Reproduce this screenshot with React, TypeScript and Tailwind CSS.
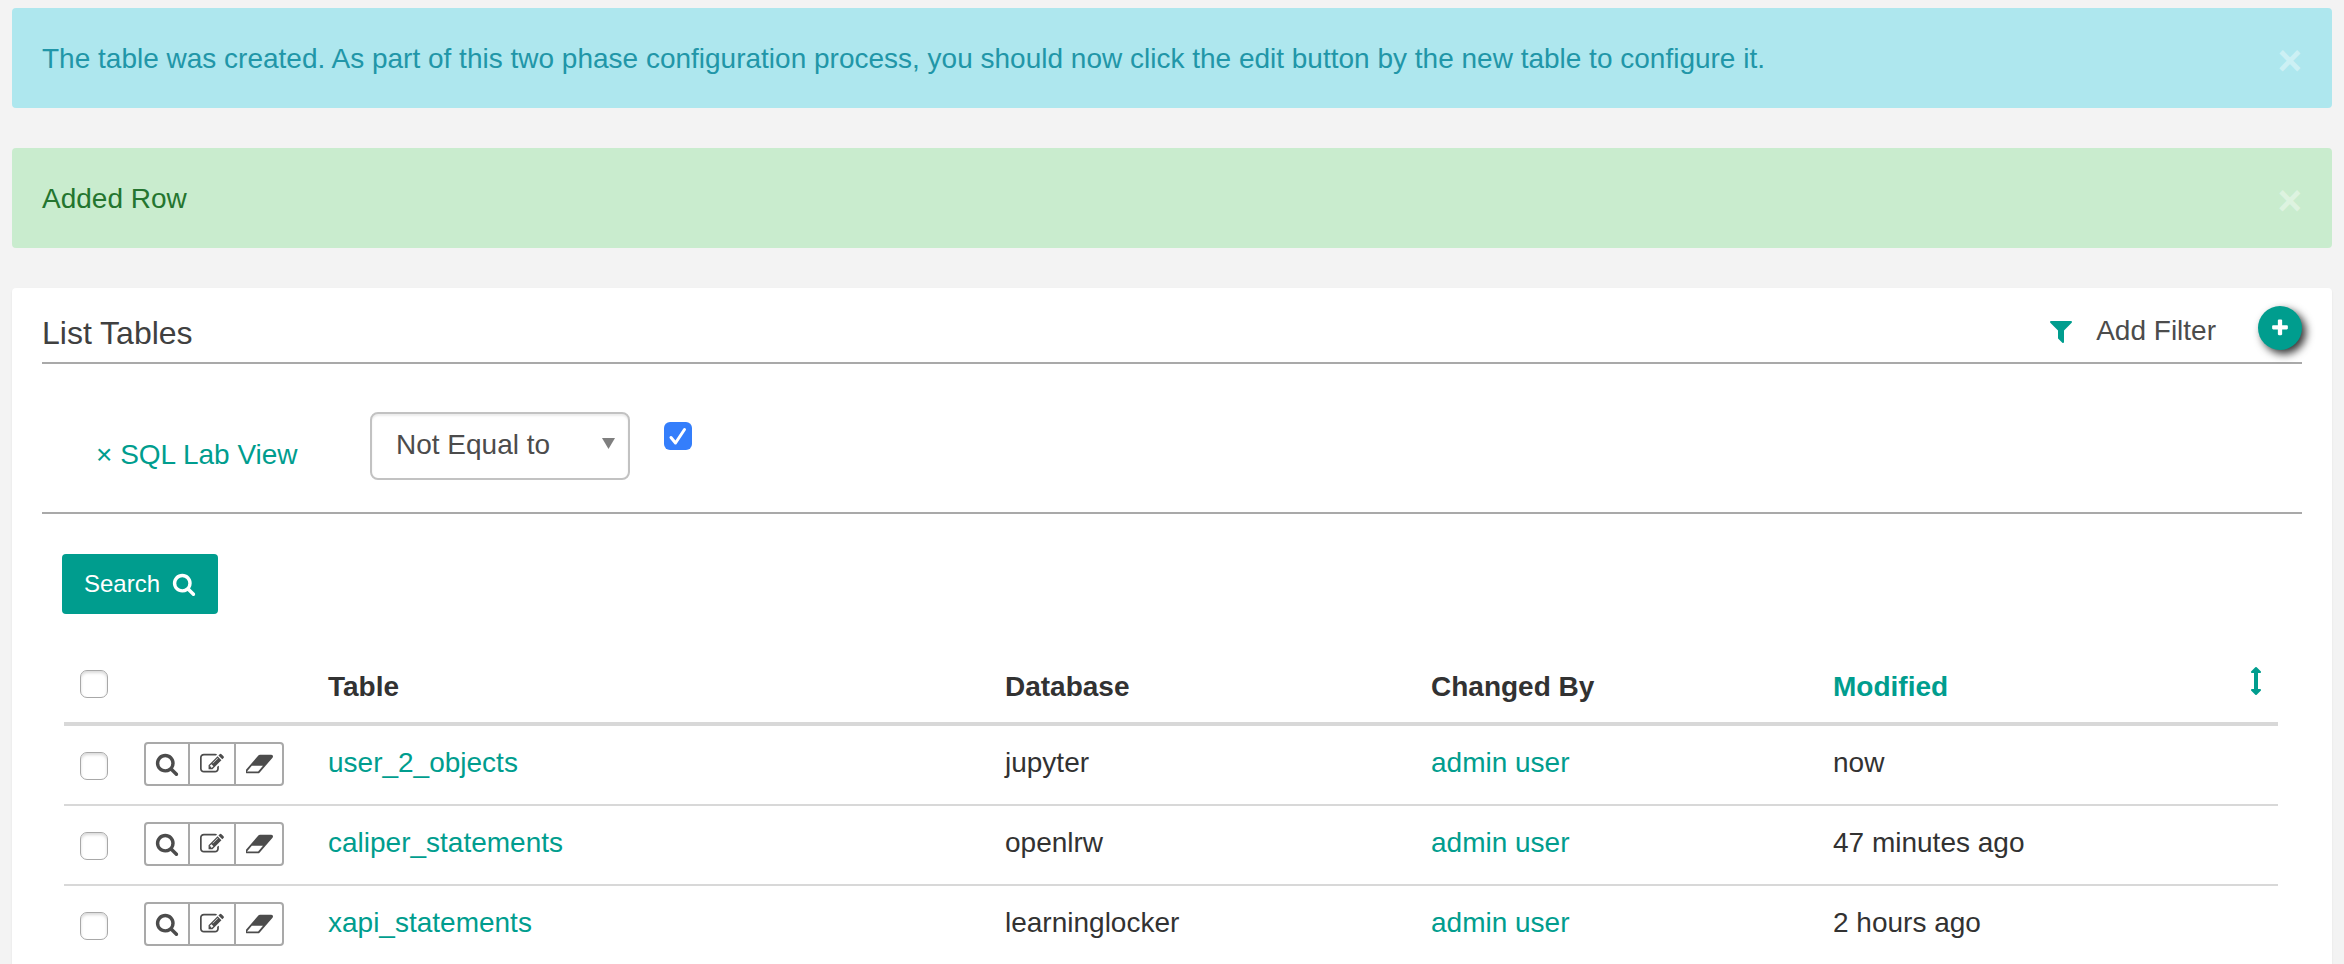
import type { ReactNode } from "react";

const PATHS = {
  search:
    "M1216 832q0-185-131.5-316.5t-316.5-131.5-316.5 131.5-131.5 316.5 131.5 316.5 316.5 131.5 316.5-131.5 131.5-316.5zm512 832q0 52-38 90t-90 38q-54 0-90-38l-343-342q-179 124-399 124-143 0-273.5-55.5t-225-150-150-225-55.5-273.5 55.5-273.5 150-225 225-150 273.5-55.5 273.5 55.5 225 150 150 225 55.5 273.5q0 220-124 399l343 343q37 37 37 90z",
  edit: "M888 1184l116-116-152-152-116 116v56h96v96h56zm440-720q-16-16-33 1l-350 350q-17 17-1 33t33-1l350-350q17-17 1-33zm80 594v190q0 119-84.5 203.5t-203.5 84.5h-832q-119 0-203.5-84.5t-84.5-203.5v-832q0-119 84.5-203.5t203.5-84.5h832q63 0 117 25 15 7 18 23 3 17-9 29l-49 49q-14 14-32 8-23-6-45-6h-832q-66 0-113 47t-47 113v832q0 66 47 113t113 47h832q66 0 113-47t47-113v-126q0-13 9-22l64-64q15-15 35-7t20 29zm-96-738l288 288-672 672h-288v-288zm444 132l-92 92-288-288 92-92q28-28 68-28t68 28l152 152q28 28 28 68t-28 68z",
  eraser:
    "M832 1408l336-384h-768l-336 384h768zm1013-1077q15 34 9.5 71.5t-30.5 65.5l-896 1024q-38 44-96 44h-768q-38 0-69.5-20.5t-47.5-54.5q-15-34-9.5-71.5t30.5-65.5l896-1024q38-44 96-44h768q38 0 69.5 20.5t47.5 54.5z",
  filter:
    "M1595 295q17 41-14 70l-493 493v742q0 42-39 59-13 5-25 5-27 0-45-19l-256-256q-19-19-19-45v-486l-493-493q-31-29-14-70 17-39 59-39h1280q42 0 59 39z",
  plus: "M1600 736v192q0 40-28 68t-68 28h-416v416q0 40-28 68t-68 28h-192q-40 0-68-28t-28-68v-416h-416q-40 0-68-28t-28-68v-192q0-40 28-68t68-28h416v-416q0-40 28-68t68-28h192q40 0 68 28t28 68v416h416q40 0 68 28t28 68z",
  sort: "M1216 320q0 26-19 45t-45 19h-128v1024h128q26 0 45 19t19 45-19 45l-256 256q-19 19-45 19t-45-19l-256-256q-19-19-19-45t19-45 45-19h128v-1024h-128q-26 0-45-19t-19-45 19-45l256-256q19-19 45-19t45 19l256 256q19 19 19 45z",
};

function Icon({ name, className, viewBox = "0 0 1792 1792" }: { name: keyof typeof PATHS; className: string; viewBox?: string }) {
  return (
    <svg viewBox={viewBox} className={className} fill="currentColor" aria-hidden="true">
      <path d={PATHS[name]} />
    </svg>
  );
}

function Alert({ className, children }: { className: string; children: ReactNode }) {
  return (
    <div role="alert" className={`flex items-start justify-between rounded-[4px] px-[30px] pt-[31px] pb-[29px] ${className}`}>
      <p>{children}</p>
      <button type="button" aria-label="Close" className="h-10 text-[42px] leading-[44px] font-bold text-white/40">
        ×
      </button>
    </div>
  );
}

const CHECKBOX =
  "block size-7 appearance-none rounded-[7px] border border-[#a8a8a8] bg-white shadow-[inset_0_2px_3px_rgba(0,0,0,0.15)]";

const ROWS = [
  { table: "user_2_objects", database: "jupyter", by: "admin user", modified: "now" },
  { table: "caliper_statements", database: "openlrw", by: "admin user", modified: "47 minutes ago" },
  { table: "xapi_statements", database: "learninglocker", by: "admin user", modified: "2 hours ago" },
];

export default function App() {
  return (
    <div className="flex h-screen flex-col gap-10 overflow-hidden bg-[#f3f3f3] px-3 pt-2 font-['Liberation_Sans',Arial,sans-serif] text-[28px] leading-10 text-[#323232]">
      <Alert className="bg-[#aee7ee] text-[#2196a8]">
        The table was created. As part of this two phase configuration process, you should now click the edit button by
        the new table to configure it.
      </Alert>
      <Alert className="bg-[#c9ecce] text-[#24752f]">Added Row</Alert>

      <main className="shrink-0 rounded-[4px] bg-white px-[30px] pb-10 shadow-[0_1px_2px_rgba(0,0,0,0.08)]">
        <header className="flex h-[76px] items-center justify-between border-b-2 border-[#a9a9a9]">
          <h1 className="pt-4 text-[32px] text-[#404040]">List Tables</h1>
          <div className="flex items-center pt-[6px] text-[#4c4c4c]">
            <button type="button" className="flex items-center gap-[21px] pt-[6px]">
              <Icon name="filter" className="size-7 text-[#009d8e]" />
              Add Filter
            </button>
            <a
              href="#add"
              aria-label="Add table"
              className="ml-[42px] flex size-11 items-center justify-center rounded-full bg-[#009d8e] text-white shadow-[4px_4px_8px_rgba(0,0,0,0.8)]"
            >
              <Icon name="plus" className="size-5" />
            </a>
          </div>
        </header>

        <div className="flex h-[150px] items-start border-b-2 border-[#a9a9a9] pt-12">
          <a href="#remove-filter" className="w-[328px] pt-[23px] pl-[54px] text-[#009d8e]">
            × SQL Lab View
          </a>
          <div className="relative">
            <select
              aria-label="Filter operation"
              className="block h-[68px] w-[260px] appearance-none rounded-[8px] border-2 border-[#c2c2c2] bg-white pb-[2px] pl-6 text-[#4c4c4c] shadow-[inset_0_2px_2px_rgba(0,0,0,0.08)]"
            >
              <option>Not Equal to</option>
              <option>Equal to</option>
            </select>
            <svg viewBox="0 0 13 11" className="pointer-events-none absolute top-[26px] right-[15px] h-[11px] w-[13px]" aria-hidden="true">
              <path d="M0 0H13L6.5 11Z" fill="#7f7f7f" />
            </svg>
          </div>
          <div className="relative mt-[10px] ml-[34px]">
            <input
              type="checkbox"
              aria-label="SQL Lab View"
              defaultChecked
              className="peer block size-7 appearance-none rounded-[6px] border border-[#c2c2c2] checked:border-0 checked:bg-[#347efb]"
            />
            <svg viewBox="0 0 28 28" className="pointer-events-none absolute inset-0 hidden size-7 peer-checked:block" aria-hidden="true">
              <path d="M7 15.5L11.5 21L20.5 7.5" fill="none" stroke="#fff" strokeWidth="3" strokeLinecap="round" strokeLinejoin="round" />
            </svg>
          </div>
        </div>

        <button
          type="button"
          className="mt-10 ml-5 flex h-[60px] items-center gap-3 rounded-[4px] bg-[#009d8e] px-[22px] text-[24px] text-white"
        >
          Search
          <Icon name="search" className="size-6" />
        </button>

        <div className="mt-7 pr-6 pl-[22px]">
          <table className="w-full table-fixed border-separate border-spacing-0 text-left">
            <colgroup>
              <col className="w-[64px]" />
              <col className="w-[184px]" />
              <col />
              <col className="w-[426px]" />
              <col className="w-[402px]" />
              <col className="w-[461px]" />
            </colgroup>
            <thead>
              <tr className="h-[84px] align-top [&>*]:border-b-4 [&>*]:border-[#d8d8d8]">
                <th className="pt-7 pl-4">
                  <input type="checkbox" aria-label="Select all" className={CHECKBOX} />
                </th>
                <td />
                <th className="pt-[25px] pl-4 font-bold">Table</th>
                <th className="pt-[25px] pl-4 font-bold">Database</th>
                <th className="pt-[25px] pl-4 font-bold">Changed By</th>
                <th className="pt-[25px] pr-2 pl-4 font-bold text-[#009d8e]">
                  <a href="#sort-modified" className="flex items-start justify-between">
                    Modified
                    <Icon name="sort" className="size-7" />
                  </a>
                </th>
              </tr>
            </thead>
            <tbody>
              {ROWS.map((row) => (
                <tr key={row.table} className="h-20 align-top [&>*]:border-b-2 [&>*]:border-[#d8d8d8]">
                  <td className="pt-[26px] pl-4">
                    <input type="checkbox" aria-label={`Select ${row.table}`} className={CHECKBOX} />
                  </td>
                  <td className="pt-4 pl-4">
                    <div className="flex h-11 w-[140px] divide-x-2 divide-[#a9a9a9] rounded-[4px] border-2 border-[#a9a9a9] text-[#4c4c4c]">
                      <a href="#show" aria-label="Show record" className="flex w-11 items-center justify-center">
                        <Icon name="search" className="size-6" />
                      </a>
                      <a href="#edit" aria-label="Edit record" className="flex w-[46px] items-center justify-center">
                        <Icon name="edit" className="size-6" />
                      </a>
                      <a href="#delete" aria-label="Delete record" className="flex w-[46px] items-center justify-center">
                        <Icon name="eraser" className="h-[26px] w-[27px]" viewBox="0 0 1856 1792" />
                      </a>
                    </div>
                  </td>
                  <td className="pt-[17px] pl-4 text-[#009d8e]">
                    <a href="#explore">{row.table}</a>
                  </td>
                  <td className="pt-[17px] pl-4">{row.database}</td>
                  <td className="pt-[17px] pl-4 text-[#009d8e]">
                    <a href="#user">{row.by}</a>
                  </td>
                  <td className="pt-[17px] pl-4">{row.modified}</td>
                </tr>
              ))}
            </tbody>
          </table>
        </div>
      </main>
    </div>
  );
}
